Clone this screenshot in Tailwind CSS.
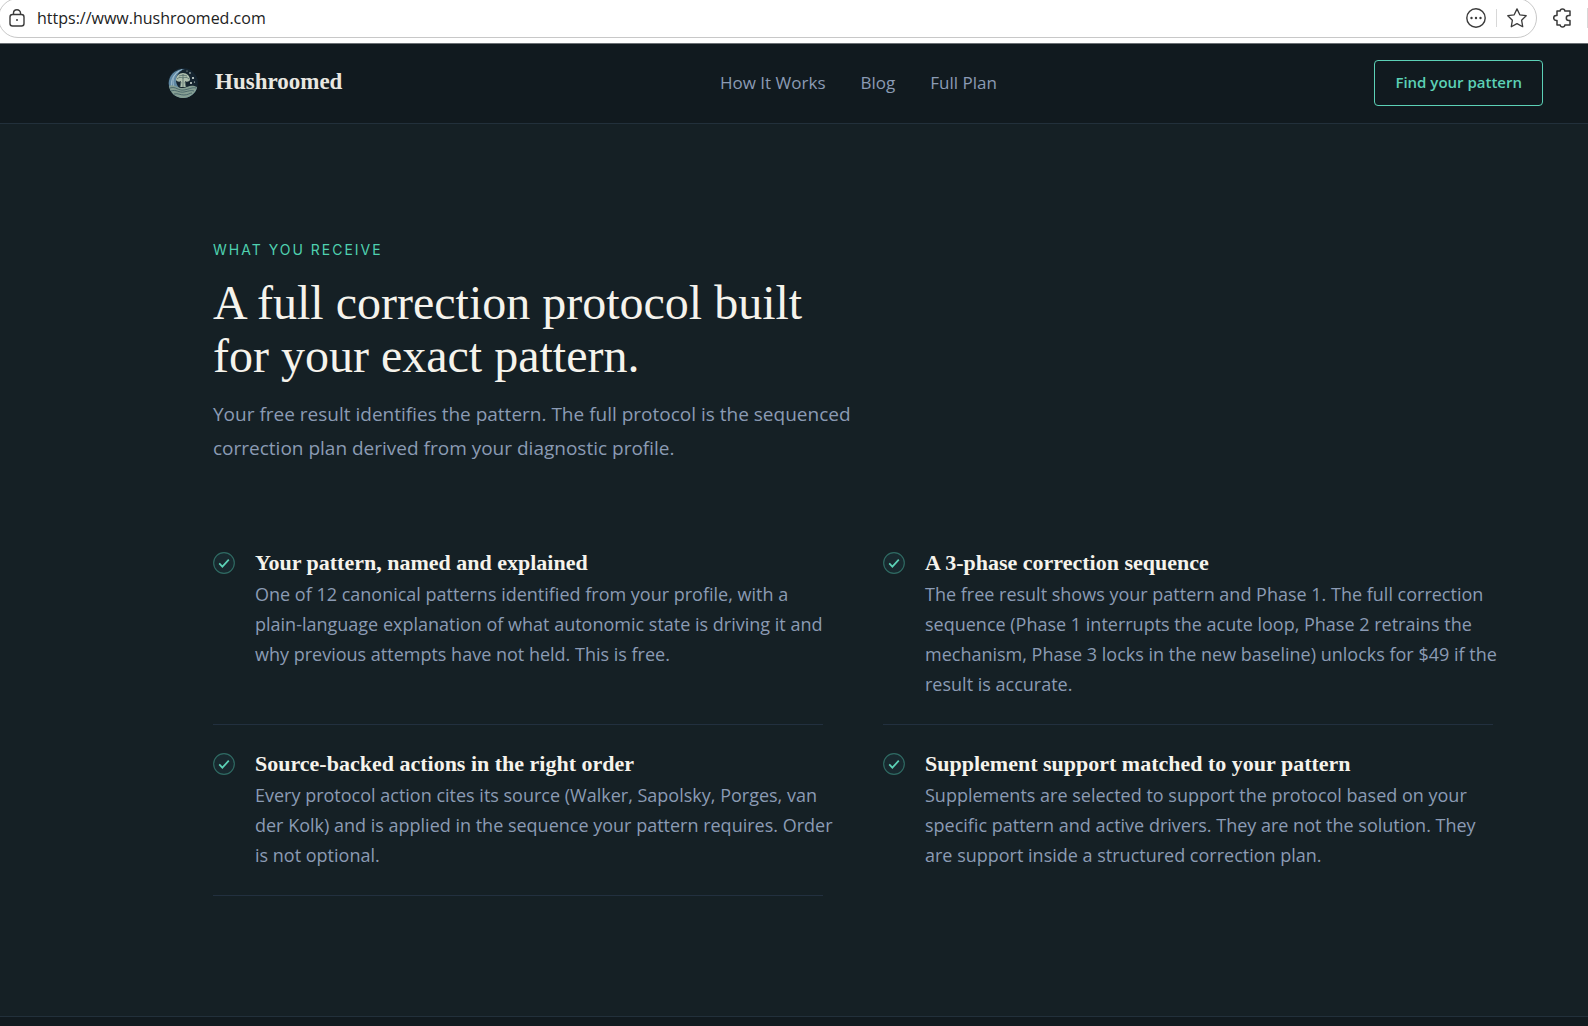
<!DOCTYPE html>
<html lang="en">
<head>
  <meta charset="UTF-8">
  <meta name="viewport" content="width=device-width, initial-scale=1.0">
  <title>Hushroomed</title>
  <!-- Tailwind CSS CDN -->
  <script src="https://cdn.jsdelivr.net/npm/@tailwindcss/browser@4"></script>
</head>
<body class="bg-[#152025] font-['Open_Sans','Noto_Sans',sans-serif] text-[#8b9bb4]">

  <!-- Browser bar -->
  <div class="flex h-11 items-start overflow-hidden border-b border-[#6b7074] bg-white text-[#3b3b3b]">
    <div class="-ml-0.5 -mt-0.5 flex h-10 flex-1 items-center rounded-full border border-[#c8c8c8] pl-[9px] pr-[9px]">
      <svg class="h-[18px] w-[18px] shrink-0" fill="none" viewBox="0 0 18 18" stroke="currentColor" stroke-width="1.4">
        <rect x="2" y="5.5" width="14" height="11.5" rx="2.5" />
        <path d="M5.5 5.5V4a3.5 3.2 0 0 1 7 0v1.500" />
        <circle cx="9" cy="11" r="1" fill="currentColor" stroke="none" />
      </svg>
      <label for="address" class="sr-only">Address</label>
      <input id="address" type="text" value="https://www.hushroomed.com" class="ml-[11px] h-8 min-w-0 flex-1 bg-transparent text-base text-[#222] outline-none">
      <button aria-label="More">
        <svg class="h-5 w-5" fill="none" viewBox="0 0 20 20" stroke="currentColor" stroke-width="1.4">
          <circle cx="10" cy="10" r="9.2" />
          <g fill="currentColor" stroke="none"><circle cx="5.500" cy="10" r="1.2" /><circle cx="10" cy="10" r="1.2" /><circle cx="14.5" cy="10" r="1.2" /></g>
        </svg>
      </button>
      <span class="mx-[10px] h-[18px] w-px bg-[#d8d8d8]"></span>
      <button aria-label="Favorite">
        <svg class="h-5 w-5" fill="none" viewBox="0 0 20 20" stroke="currentColor" stroke-width="1.3" stroke-linejoin="round">
          <path d="M10 .9l2.8 5.9 6.400.9-4.600 4.500 1.100 6.500L10 15.600l-5.700 3.100 1.100-6.500L.8 7.700l6.400-.9z" />
        </svg>
      </button>
    </div>
    <button aria-label="Extensions" class="ml-4 mr-[14px] mt-2">
      <svg class="h-5 w-5" fill="none" viewBox="0 0 20 20" stroke="currentColor" stroke-width="1.5" stroke-linejoin="round">
        <path d="M4 3h3.200a2.300 2 0 0 1 4.600 0H17v4.500h-1.200a2.300 2.300 0 0 0 0 5H17V17h-5.200a2.300 2 0 0 1-4.600 0H4v-4.500H3.200a2.300 2.300 0 0 1 0-5H4z" />
      </svg>
    </button>
    <span class="mt-2 h-5 w-px bg-[#d8d8d8]"></span>
  </div>

  <!-- Header -->
  <header class="flex h-20 items-center justify-between border-b border-[#22303b] bg-[#111a1f] pb-0.5 pl-[168px] pr-[45px]">
    <a href="#" class="flex items-center gap-[17px]">
      <svg class="h-[30px] w-[30px]" fill="none" viewBox="0 0 30 30">
        <circle cx="15" cy="15" r="15" fill="#15242f" />
        <path d="M17 1A14.500 14.500 0 1 0 29 20C21 25 9 23 8 13 8 7 12 2 17 1z" fill="#5f88a3" />
        <g stroke="#b4cedb" stroke-width=".7">
          <path d="M14 1.500C7 4 3 11 6 19M11 3C5 7 2 13 4 20" />
        </g>
        <path d="M1 18c5-3 9 3 14 2s8-4 14-1c-1 6-7 11-14 11S2 25 1 18z" fill="#869f93" />
        <g stroke="#3d5a62" stroke-width=".8">
          <path d="M2 20c6-2 8 3 14 2s8-3 12-2M3 23c5-2 8 2 13 1s7-2 10-1M6 26c4-1 6 1 10 1s6-2 8-2" />
        </g>
        <path d="M8 12c0-4 3-7 7-7s7 3 7 7c-1 2-4 2-5 1l1 6h-6l1-6c-1 1-4 1-5-1z" fill="#aebfae" />
        <g stroke="#465e5f" stroke-width=".7">
          <path d="M9 11c2-2 4-2 6-1 2-1 4-1 6 1M11 8c2-1 6-1 8 0M15 6v13M13 14l-1 5M17 14l1 5" />
        </g>
        <g fill="#d7e2dd"><circle cx="22" cy="5" r=".8" /><circle cx="25" cy="10" r="1.1" /><circle cx="23" cy="15" r="1" /><circle cx="26.5" cy="14" r=".6" /><circle cx="19" cy="3" r=".5" /></g>
      </svg>
      <span class="font-['Liberation_Serif',serif] text-[23px] font-bold text-[#e9e7e1]">Hushroomed</span>
    </a>
    <nav class="flex gap-[35px] text-[17px]">
      <a href="#">How It Works</a>
      <a href="#">Blog</a>
      <a href="#">Full Plan</a>
    </nav>
    <button class="h-[46px] rounded border border-[#5cd1b6] px-5 text-[15px] font-semibold text-[#5cd1b6]">Find your pattern</button>
  </header>

  <!-- What you receive -->
  <main class="border-b border-[#22303b] pb-[120px] pl-[213px] pr-[95px] pt-[116px]">
    <p class="font-['Inter',sans-serif] text-sm leading-5 tracking-[2px] text-[#4fd1b0]">WHAT YOU RECEIVE</p>
    <h1 class="mt-4 font-['Liberation_Serif',serif] text-[48px] leading-[53px] text-[#f5f3ec]">A full correction protocol built<br>for your exact pattern.</h1>
    <p class="mt-[15px] text-[19px] leading-[34px]">Your free result identifies the pattern. The full protocol is the sequenced<br>correction plan derived from your diagnostic profile.</p>

    <ul class="mt-[59px] grid grid-cols-2 gap-x-15">
      <li class="flex gap-5 border-b border-[#22303f] pb-[25px] pt-[23px]">
        <svg class="mt-[5px] h-[22px] w-[22px] shrink-0" fill="none" viewBox="0 0 23 23" stroke="#5cd1b6">
          <circle cx="11.5" cy="11.5" r="10.8" fill="#18292f" stroke="#2f6a63" stroke-width="1.2" />
          <path d="M6.500 12l3.300 3.300L16.500 8" stroke-width="1.8" />
        </svg>
        <div>
          <h2 class="font-['Liberation_Serif',serif] text-[22px] font-bold leading-8 text-[#f5f3ec]">Your pattern, named and explained</h2>
          <p class="whitespace-nowrap text-lg leading-[30px]">One of 12 canonical patterns identified from your profile, with a<br>plain-language explanation of what autonomic state is driving it and<br>why previous attempts have not held. This is free.</p>
        </div>
      </li>
      <li class="flex gap-5 border-b border-[#22303f] pb-[25px] pt-[23px]">
        <svg class="mt-[5px] h-[22px] w-[22px] shrink-0" fill="none" viewBox="0 0 23 23" stroke="#5cd1b6">
          <circle cx="11.5" cy="11.5" r="10.8" fill="#18292f" stroke="#2f6a63" stroke-width="1.2" />
          <path d="M6.500 12l3.300 3.300L16.500 8" stroke-width="1.8" />
        </svg>
        <div>
          <h2 class="font-['Liberation_Serif',serif] text-[22px] font-bold leading-8 text-[#f5f3ec]">A 3-phase correction sequence</h2>
          <p class="whitespace-nowrap text-lg leading-[30px]">The free result shows your pattern and Phase 1. The full correction<br>sequence (Phase 1 interrupts the acute loop, Phase 2 retrains the<br>mechanism, Phase 3 locks in the new baseline) unlocks for $49 if the<br>result is accurate.</p>
        </div>
      </li>
      <li class="flex gap-5 border-b border-[#22303f] pb-[25px] pt-[23px]">
        <svg class="mt-[5px] h-[22px] w-[22px] shrink-0" fill="none" viewBox="0 0 23 23" stroke="#5cd1b6">
          <circle cx="11.5" cy="11.5" r="10.8" fill="#18292f" stroke="#2f6a63" stroke-width="1.2" />
          <path d="M6.500 12l3.300 3.300L16.500 8" stroke-width="1.8" />
        </svg>
        <div>
          <h2 class="font-['Liberation_Serif',serif] text-[22px] font-bold leading-8 text-[#f5f3ec]">Source-backed actions in the right order</h2>
          <p class="whitespace-nowrap text-lg leading-[30px]">Every protocol action cites its source (Walker, Sapolsky, Porges, van<br>der Kolk) and is applied in the sequence your pattern requires. Order<br>is not optional.</p>
        </div>
      </li>
      <li class="flex gap-5 pb-[25px] pt-[23px]">
        <svg class="mt-[5px] h-[22px] w-[22px] shrink-0" fill="none" viewBox="0 0 23 23" stroke="#5cd1b6">
          <circle cx="11.5" cy="11.5" r="10.8" fill="#18292f" stroke="#2f6a63" stroke-width="1.2" />
          <path d="M6.500 12l3.300 3.300L16.500 8" stroke-width="1.8" />
        </svg>
        <div>
          <h2 class="font-['Liberation_Serif',serif] text-[22px] font-bold leading-8 text-[#f5f3ec]">Supplement support matched to your pattern</h2>
          <p class="whitespace-nowrap text-lg leading-[30px]">Supplements are selected to support the protocol based on your<br>specific pattern and active drivers. They are not the solution. They<br>are support inside a structured correction plan.</p>
        </div>
      </li>
    </ul>
  </main>

  <footer class="h-[9px] bg-[#111a1f]"></footer>
</body>
</html>
